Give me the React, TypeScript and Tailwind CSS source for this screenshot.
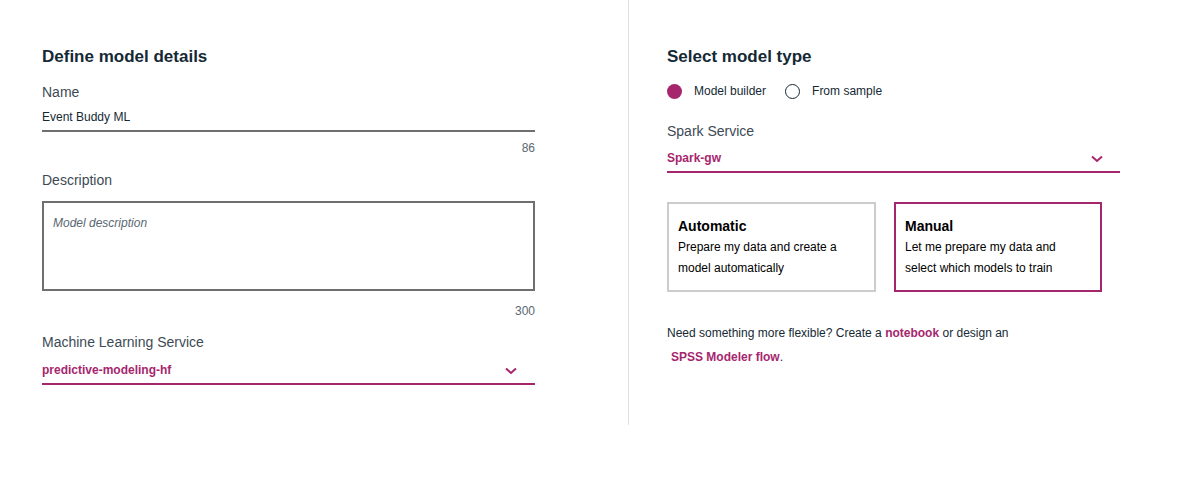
import React from "react";

const Chevron = () => (
  <svg width="12" height="8" viewBox="0 0 12 8" fill="none" className="block">
    <path d="M1 1.5 L6 6 L11 1.5" stroke="#a6266e" strokeWidth="2" />
  </svg>
);

export default function App() {
  return (
    <div
      className="w-[1203px] h-[491px] bg-white flex text-[#152935]"
      style={{ fontFamily: '"Liberation Sans", Arial, sans-serif' }}
    >
      {/* Left column */}
      <div className="w-[629px] h-[425px] border-r border-[#e0e0e0] pl-[42px] pr-[93px] pt-[47px] flex flex-col">
        <h2 className="text-[17px] leading-[20px] font-bold text-[#152935]">Define model details</h2>

        <div className="mt-[15px] text-[14px] leading-[20px] text-[#3d4a55]">Name</div>
        <div className="mt-[7px] text-[12px] leading-[16px] pb-[5px] border-b-2 border-[#6f6f6f] text-[#152935]">
          Event Buddy ML
        </div>
        <div className="mt-[8px] text-[12px] leading-[16px] text-right text-[#5a6872]">86</div>

        <div className="mt-[14px] text-[14px] leading-[20px] text-[#3d4a55]">Description</div>
        <div className="mt-[11px] h-[90px] border-2 border-[#6f6f6f] pt-[7px] pl-[9px]">
          <span className="text-[12px] leading-[16px] italic text-[#5a6872]">Model description</span>
        </div>
        <div className="mt-[12px] text-[12px] leading-[16px] text-right text-[#5a6872]">300</div>

        <div className="mt-[13px] text-[14px] leading-[20px] text-[#3d4a55]">Machine Learning Service</div>
        <div className="mt-[10px] flex items-center justify-between pb-[5px] border-b-2 border-[#a6266e]">
          <span className="text-[12px] leading-[16px] font-bold text-[#a6266e]">predictive-modeling-hf</span>
          <span className="mr-[18px] mt-[2px]">
            <Chevron />
          </span>
        </div>
      </div>

      {/* Right column */}
      <div className="w-[574px] pl-[38px] pt-[47px] flex flex-col">
        <div className="w-[453px] flex flex-col">
          <h2 className="text-[17px] leading-[20px] font-bold text-[#152935]">Select model type</h2>

          <div className="mt-[16px] flex items-center h-[16px] text-[12px] text-[#152935]">
            <span className="w-[15px] h-[15px] rounded-full bg-[#a6266e] shrink-0" />
            <span className="ml-[12px]">Model builder</span>
            <span className="ml-[19px] w-[15px] h-[15px] rounded-full border-[1.5px] border-[#152935] shrink-0" />
            <span className="ml-[12px]">From sample</span>
          </div>

          <div className="mt-[22px] text-[14px] leading-[20px] text-[#3d4a55]">Spark Service</div>
          <div className="mt-[9px] flex items-center justify-between pb-[5px] border-b-2 border-[#a6266e]">
            <span className="text-[12px] leading-[16px] font-bold text-[#a6266e]">Spark-gw</span>
            <span className="mr-[17px] mt-[2px]">
              <Chevron />
            </span>
          </div>

          <div className="mt-[29px] flex gap-[18px]">
            <div className="w-[209px] h-[90px] border-2 border-[#cccccc] pl-[9px] pt-[13px]">
              <div className="text-[14px] leading-[18px] font-bold text-black">Automatic</div>
              <div className="mt-[2px] text-[12px] leading-[21px] text-black">
                Prepare my data and create a
                <br />
                model automatically
              </div>
            </div>
            <div className="w-[208px] h-[90px] border-2 border-[#a6266e] pl-[9px] pt-[13px]">
              <div className="text-[14px] leading-[18px] font-bold text-black">Manual</div>
              <div className="mt-[2px] text-[12px] leading-[21px] text-black">
                Let me prepare my data and
                <br />
                select which models to train
              </div>
            </div>
          </div>

          <div className="mt-[29px] text-[12px] leading-[24px] text-[#152935]">
            <div>
              Need something more flexible? Create a{" "}
              <span className="font-bold text-[#a6266e]">notebook</span> or design an
            </div>
            <div className="pl-[4px]">
              <span className="font-bold text-[#a6266e]">SPSS Modeler flow</span>.
            </div>
          </div>
        </div>
      </div>
    </div>
  );
}
